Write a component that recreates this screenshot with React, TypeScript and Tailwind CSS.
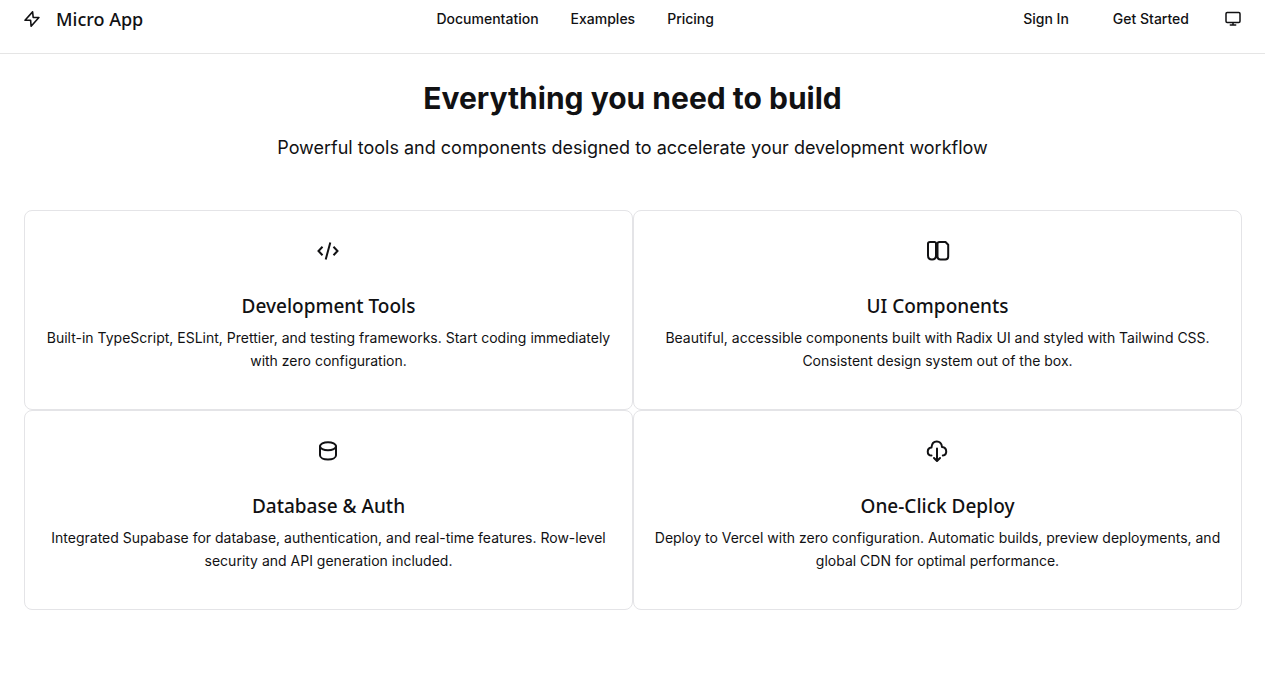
import type { ReactNode } from "react";

const navLinks = ["Documentation", "Examples", "Pricing"];

function BoltIcon() {
  return (
    <svg className="size-4" viewBox="0 0 16 16" fill="none" stroke="currentColor" strokeWidth="1.6" strokeLinejoin="round" aria-hidden="true">
      <path d="M8.6 0.9 1 9.2h5.6L7.1 15.2l7.8-8.7H9.2z" />
    </svg>
  );
}

function DesktopIcon() {
  return (
    <svg className="size-4" viewBox="0 0 16 16" fill="none" stroke="currentColor" strokeWidth="1.5" strokeLinecap="round" strokeLinejoin="round" aria-hidden="true">
      <rect x="1" y="1.5" width="14" height="10" rx="1.2" />
      <path d="M8 12v2M5.3 14h5.4" />
    </svg>
  );
}

function CardIcon({ children }: { children: ReactNode }) {
  return (
    <svg className="size-6" viewBox="1 0 24 24" fill="none" stroke="currentColor" strokeWidth="2" strokeLinecap="round" strokeLinejoin="round" aria-hidden="true">
      {children}
    </svg>
  );
}

const features = [
  {
    title: "Development Tools",
    text: "Built-in TypeScript, ESLint, Prettier, and testing frameworks. Start coding immediately with zero configuration.",
    icon: <path strokeLinecap="butt" strokeLinejoin="miter" d="M6.5 7.8 2.5 12l4 4.2M17.5 7.8l4 4.2-4 4.2M14.3 3.5l-4.6 17" />,
  },
  {
    title: "UI Components",
    text: "Beautiful, accessible components built with Radix UI and styled with Tailwind CSS. Consistent design system out of the box.",
    icon: (
      <path d="M5 3h4.7q1.3 0 1.3 1.500V16.500q0 4-4 4t-4-4V4.500q0-1.500 2-1.500zM14.500 3h6l2.700 2.800V17.500q0 3-3 3h-4.700q-3 0-3-3V4.500q0-1.500 2-1.500z" />
    ),
  },
  {
    title: "Database & Auth",
    text: "Integrated Supabase for database, authentication, and real-time features. Row-level security and API generation included.",
    icon: (
      <>
        <ellipse cx="12" cy="7.2" rx="8" ry="4" />
        <path d="M4 7.2v9C4 18.7 7.500 20.400 12 20.400s8-1.700 8-4.200V7.200" />
      </>
    ),
  },
  {
    title: "One-Click Deploy",
    text: "Deploy to Vercel with zero configuration. Automatic builds, preview deployments, and global CDN for optimal performance.",
    icon: (
      <path d="M6.500 16.500C1.500 16.500 1.500 9 6.500 8.500 7 0.500 16.500 0.500 17 8c5.500 0.500 5.500 8 0.800 8.500M12 9.500v12M9 19l3 3 3-3" />
    ),
  },
];

export default function App() {
  return (
    <div className="bg-white font-['Inter',sans-serif] text-[#111113]">
      <header className="flex items-center justify-between border-b border-[#e5e5e5] px-6 pt-[5px] pb-5 leading-7">
        <a href="#" className="flex items-center gap-4">
          <BoltIcon />
          <span className="font-['Noto_Sans',sans-serif] text-lg leading-7 font-medium">Micro App</span>
        </a>
        <nav className="flex gap-8 text-sm leading-7 font-medium">
          {navLinks.map((label) => (
            <a key={label} href="#">{label}</a>
          ))}
        </nav>
        <div className="flex items-center gap-3 text-sm leading-7 font-medium">
          <a href="#" className="px-4">Sign In</a>
          <a href="#" className="px-4">Get Started</a>
          <button type="button" aria-label="Change theme" className="pl-2"><DesktopIcon /></button>
        </div>
      </header>

      <main className="px-6 pt-6 pb-20">
        <div className="text-center">
          <h2 className="text-3xl leading-10 font-bold">Everything you need to build</h2>
          <p className="mt-4 text-lg leading-7">
            Powerful tools and components designed to accelerate your development workflow
          </p>
        </div>
        <section className="mt-12 -mr-px grid grid-cols-2">
          {features.map((feature) => (
            <article key={feature.title} className="flex min-h-50 flex-col items-center rounded-lg border border-[#e4e4e7] px-5 pt-7 text-center">
              <CardIcon>{feature.icon}</CardIcon>
              <h3 className="mt-7 font-['Noto_Sans',sans-serif] text-[19px] leading-[30px] font-medium">{feature.title}</h3>
              <p className="mt-[5px] text-sm leading-[23px]">{feature.text}</p>
            </article>
          ))}
        </section>
      </main>
    </div>
  );
}
